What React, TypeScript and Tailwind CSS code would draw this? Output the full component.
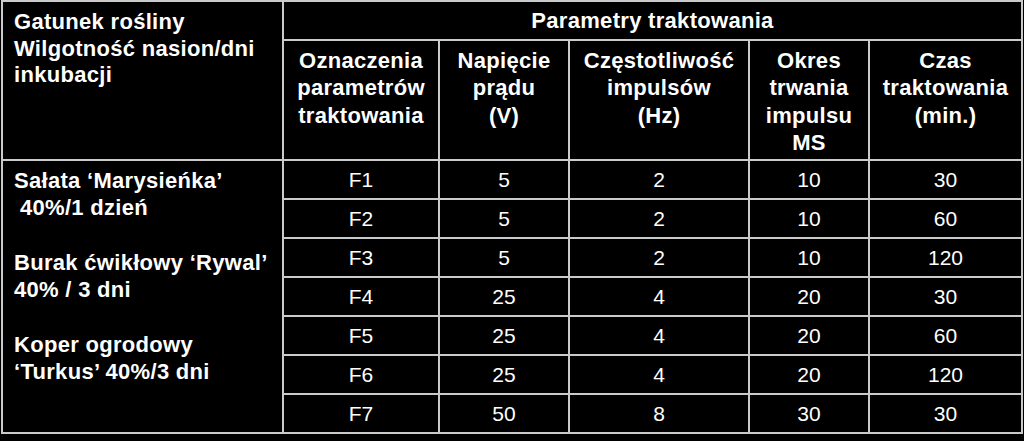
import React from "react";

const rows = [
  ["F1", "5", "2", "10", "30"],
  ["F2", "5", "2", "10", "60"],
  ["F3", "5", "2", "10", "120"],
  ["F4", "25", "4", "20", "30"],
  ["F5", "25", "4", "20", "60"],
  ["F6", "25", "4", "20", "120"],
  ["F7", "50", "8", "30", "30"],
];

const subHeaders = [
  ["Oznaczenia", "parametrów", "traktowania"],
  ["Napięcie", "prądu", "(V)"],
  ["Częstotliwość", "impulsów", "(Hz)"],
  ["Okres", "trwania", "impulsu", "MS"],
  ["Czas", "traktowania", "(min.)"],
];

export default function App() {
  return (
    <div className="min-h-[441px] w-[1024px] bg-black font-['Liberation_Sans',Arial,sans-serif] text-white">
      <div className="ml-[1px] grid w-[1022px] grid-cols-[279px_154px_128px_178px_118px_151px] grid-rows-[37px_118px_repeat(7,37px)] gap-[2px] bg-[#cacaca] p-[2px]">
        {/* lewa kolumna nagłówka */}
        <div className="row-span-2 bg-black pl-[11px] pt-[7px] text-[22px] font-bold leading-[26.5px] tracking-[0.3px]">
          <div>Gatunek rośliny</div>
          <div>Wilgotność nasion/dni</div>
          <div>inkubacji</div>
        </div>

        <div className="col-span-5 flex items-center justify-center bg-black text-[22px] font-bold leading-[27px] tracking-[0.3px]">
          Parametry traktowania
        </div>

        {subHeaders.map((lines, i) => (
          <div
            key={i}
            className="bg-black pt-[6px] text-center text-[22px] font-bold leading-[27.3px] tracking-[0.3px]"
          >
            {lines.map((l) => (
              <div key={l}>{l}</div>
            ))}
          </div>
        ))}

        {/* gatunki roślin */}
        <div className="row-span-7 bg-black pl-[11px] pt-[6px] text-[22px] font-bold leading-[27.3px] tracking-[0.3px]">
          <div>Sałata ‘Marysieńka’</div>
          <div className="pl-[6px]">40%/1 dzień</div>
          <div>&nbsp;</div>
          <div>Burak ćwikłowy ‘Rywal’</div>
          <div>40% / 3 dni</div>
          <div>&nbsp;</div>
          <div>Koper ogrodowy</div>
          <div>‘Turkus’ 40%/3 dni</div>
        </div>

        {rows.map((row) =>
          row.map((cell, j) => (
            <div
              key={row[0] + j}
              className="flex items-center justify-center bg-black text-[21px] leading-none"
            >
              {cell}
            </div>
          ))
        )}
      </div>
    </div>
  );
}
